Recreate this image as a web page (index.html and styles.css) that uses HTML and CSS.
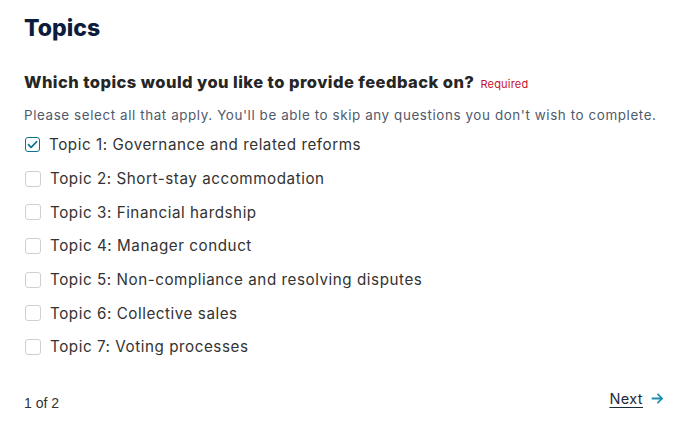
FILE: index.html
```html
<!DOCTYPE html>
<html lang="en">
<head>
<meta charset="utf-8">
<title>Topics</title>
<link rel="stylesheet" href="styles.css">
</head>
<body>
<main class="page">
  <h1 class="title">Topics</h1>
  <section class="question" role="group" aria-labelledby="qlabel">
    <div class="q-label" id="qlabel">Which topics would you like to provide feedback on? <span class="required">Required</span></div>
    <p class="hint">Please select all that apply. You'll be able to skip any questions you don't wish to complete.</p>
    <ul class="options">
      <li class="option"><span class="box checked"><svg viewBox="0 0 16 16" width="13" height="13"><path d="M3 8.2l3.3 3.3L13.2 4.5" fill="none" stroke="#0e7391" stroke-width="2" stroke-linecap="round" stroke-linejoin="round"/></svg></span>Topic 1: Governance and related reforms</li>
      <li class="option"><span class="box"></span>Topic 2: Short-stay accommodation</li>
      <li class="option"><span class="box"></span>Topic 3: Financial hardship</li>
      <li class="option"><span class="box"></span>Topic 4: Manager conduct</li>
      <li class="option"><span class="box"></span>Topic 5: Non-compliance and resolving disputes</li>
      <li class="option"><span class="box"></span>Topic 6: Collective sales</li>
      <li class="option"><span class="box"></span>Topic 7: Voting processes</li>
    </ul>
  </section>
  <div class="footer">
    <span class="pager">1 of 2</span>
    <a class="next" href="#">Next</a>
    <svg class="arrow" viewBox="0 0 14 14" width="13" height="13"><path d="M1.5 7h10.5M7.5 2.5L12 7l-4.5 4.5" fill="none" stroke="#1b8db0" stroke-width="1.9" stroke-linecap="round" stroke-linejoin="round"/></svg>
  </div>
</main>
</body>
</html>
```
FILE: styles.css
```css
html, body {
  margin: 0;
  padding: 0;
  background: #ffffff;
}
body {
  font-family: "Inter", "Liberation Sans", sans-serif;
}
.page {
  padding: 13px 24px 0 24px;
  display: flex;
  flex-direction: column;
}
.title {
  margin: 0;
  font-size: 23px;
  line-height: 30px;
  font-weight: 800;
  color: #0b1c3c;
}
.question {
  margin: 0;
  padding: 0;
}
.q-label {
  margin-top: 28px;
  font-size: 16.5px;
  line-height: 22px;
  font-weight: 800;
  color: #262626;
  letter-spacing: 0.45px;
}
.required {
  font-size: 11px;
  font-weight: 400;
  color: #c8102e;
  margin-left: 2px;
  letter-spacing: 0.2px;
}
.hint {
  margin: 11px 0 0 0;
  font-size: 13.4px;
  line-height: 18px;
  color: #505a6b;
  letter-spacing: 0.6px;
}
.options {
  list-style: none;
  margin: 4px 0 0 0;
  padding: 0;
  display: flex;
  flex-direction: column;
}
.option {
  display: flex;
  align-items: center;
  height: 33.7px;
  font-size: 15.2px;
  color: #333333;
  letter-spacing: 0.55px;
}
.box {
  width: 14px;
  height: 14px;
  border: 1px solid #cfcfcf;
  border-radius: 3px;
  margin: 0 9px 0 1px;
  flex: none;
  display: flex;
  align-items: center;
  justify-content: center;
}
.box.checked {
  border: 1.5px solid #0e7391;
  width: 13px;
  height: 13px;
}
.footer {
  display: flex;
  align-items: center;
  margin-top: 22px;
}
.pager {
  font-family: "Liberation Sans", Arial, sans-serif;
  font-size: 14px;
  color: #333333;
  margin-top: 9px;
  flex: 1;
}
.next {
  font-size: 14.5px;
  color: #1c2b3a;
  text-decoration: underline;
  text-underline-offset: 3px;
  margin-left: 1px;
  margin-right: 8px;
  letter-spacing: 0.4px;
}
.arrow {
  flex: none;
}
```
